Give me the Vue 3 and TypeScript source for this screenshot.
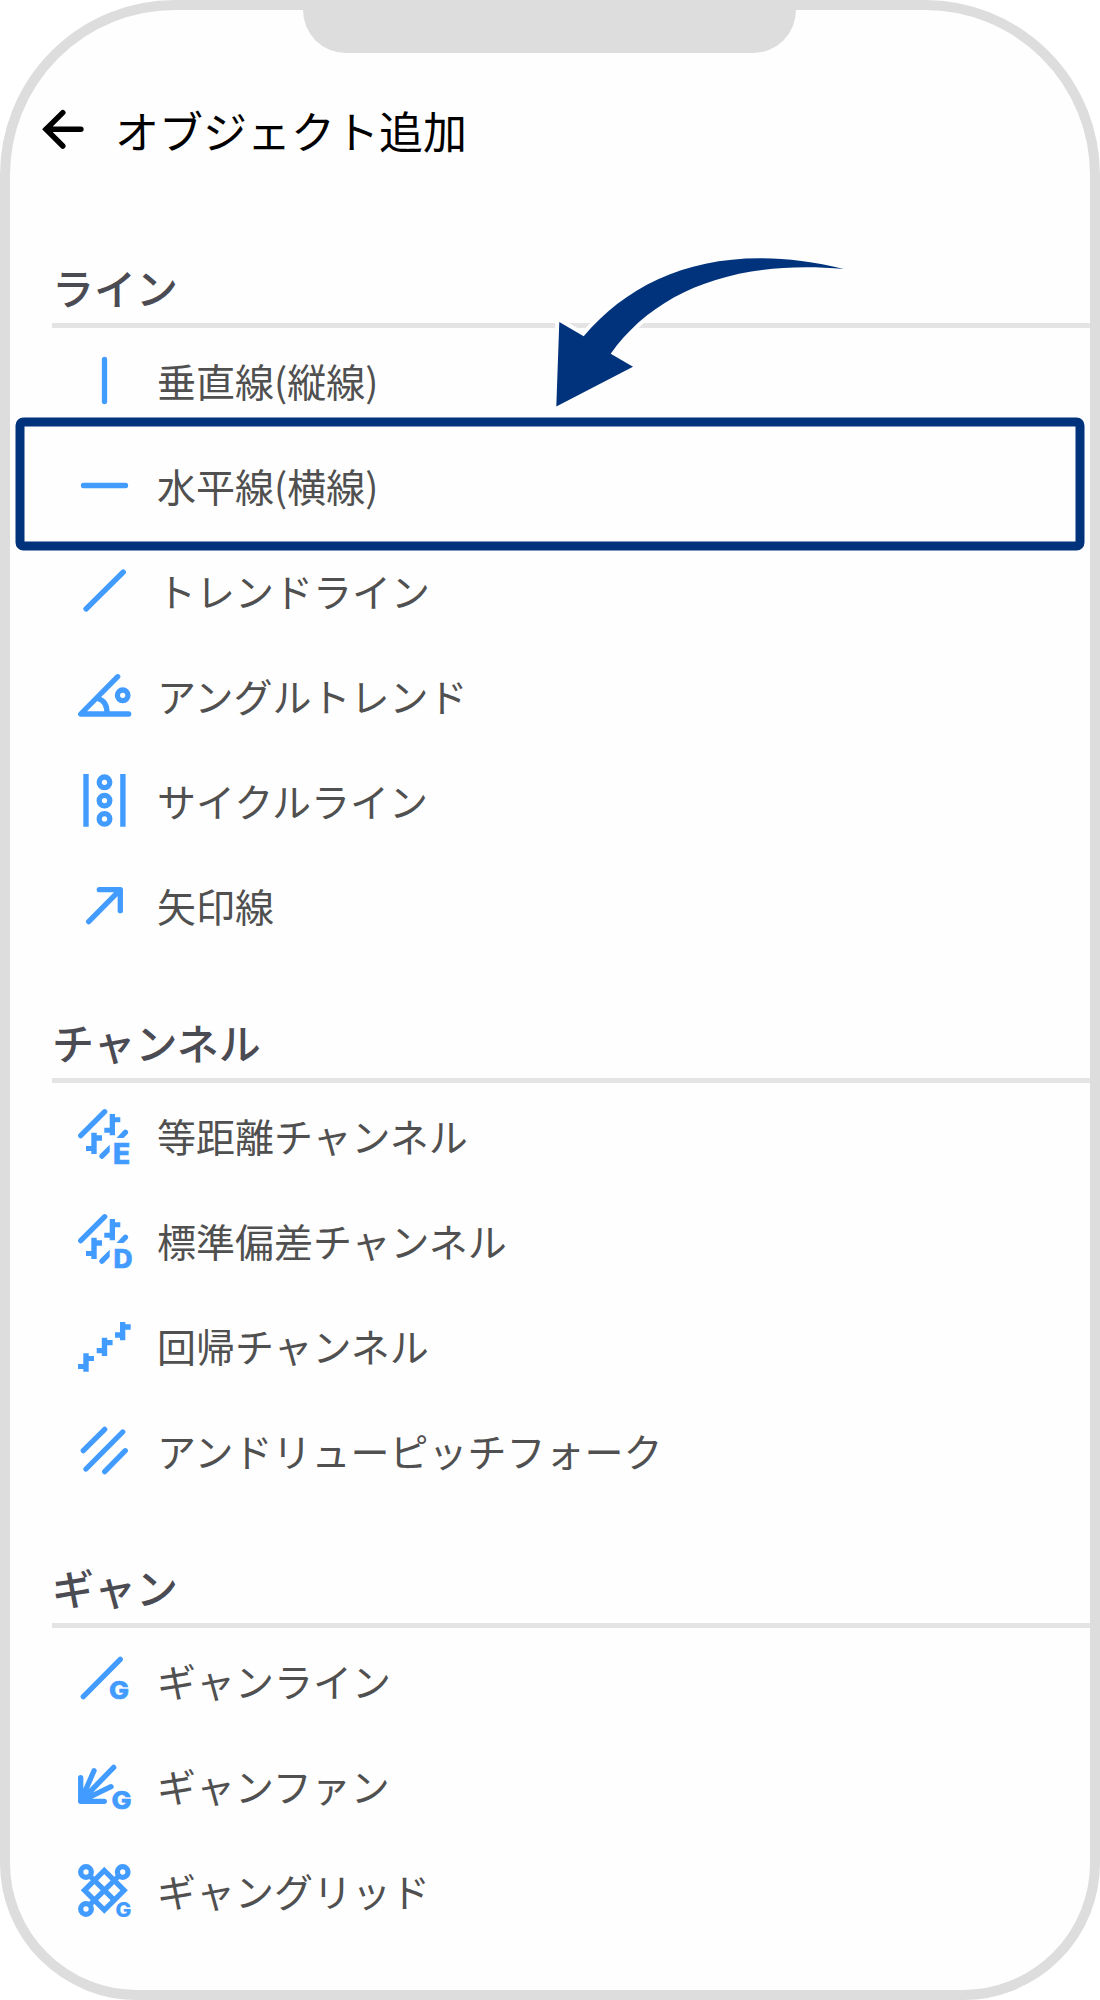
<script setup lang="ts">
type IconLetter = { char: string; x: number; y: number; size: number; width: number }
type Item = {
  label: string
  lines?: string
  solid?: string
  rings?: [number, number][]
  letter?: IconLetter
  flat?: boolean
}
type Section = { title: string; items: Item[] }

// Candlestick pair with the channel lines around it
const channelLines = 'M30.2 6.2 6.2 30.2'
const channelSolid =
  'M35.2 8.5h5.3v3.3h5.3v5h-5.3v13h-5.3v-2.6h-5.4v-5h5.4z' +
  'M16.8 27.2h5.4v2.6h5.3v5.4h-5.3v13.3h-5.4v-3h-5.3v-5h5.3z' +
  'M42 32.5 48.9 24.9A2.7 2.7 0 0 1 52.8 28.7L49 32.5z' +
  'M35.2 39.2 25.3 48.9A2.7 2.7 0 0 0 29.1 52.7L35.2 46.5z'

const sections: Section[] = [
  {
    title: 'ライン',
    items: [
      { label: '垂直線(縦線)', lines: 'M30 9V51' },
      { label: '水平線(横線)', lines: 'M9 30H51' },
      { label: 'トレンドライン', lines: 'M48.8 11.5 11.5 48.5' },
      {
        label: 'アングルトレンド',
        lines: 'M43.2 11.2 6.2 48.5H54.2M23.2 33C29.5 34.6 32.8 40 32.5 48.5',
        rings: [[48.2, 29.8]],
      },
      {
        label: 'サイクルライン',
        solid: 'M8.8 3.5h5.4v52.7h-5.4zM45.7 3.5h5.4v52.7h-5.4z',
        rings: [[30, 11.8], [30, 30.1], [30, 48.4]],
      },
      { label: '矢印線', lines: 'M24.8 14.2H45.8V35.2M45.8 14.2 14.2 46.2' },
    ],
  },
  {
    title: 'チャンネル',
    items: [
      {
        label: '等距離チャンネル',
        lines: channelLines,
        solid: channelSolid,
        letter: { char: 'E', x: 38.6, y: 58.9, size: 28, width: 17.2 },
      },
      {
        label: '標準偏差チャンネル',
        lines: channelLines,
        solid: channelSolid,
        letter: { char: 'D', x: 39, y: 57, size: 25.4, width: 19 },
      },
      {
        label: '回帰チャンネル',
        solid:
          'M45.5 6.5h5.3v2.3h5.4v5.4h-5.4v10.6h-5.3v-2.6h-5v-5.4h5z' +
          'M27.3 22.2h5.4v2.3h5.4v5.3h-5.4v10.7h-5.4v-2.7h-5.1v-5.3h5.1z' +
          'M8.8 37.8h5.4v2.7h5.3v5h-5.3v10.7h-5.4v-2.7h-5.3v-5h5.3z',
      },
      {
        label: 'アンドリューピッチフォーク',
        lines: 'M30.2 8.8 8.8 30.2M48.2 11.5 11.5 48.5M50.8 30.2 30.2 51.2',
      },
    ],
  },
  {
    title: 'ギャン',
    items: [
      {
        label: 'ギャンライン',
        lines: 'M45.8 8.8 8.8 46.2',
        letter: { char: 'G', x: 34.4, y: 48.5, size: 25, width: 20 },
      },
      {
        label: 'ギャンファン',
        lines: 'M6.2 22.2V45.8H29.8M19.5 15.2 6.2 45.8 39.2 11.8M6.2 45.8 36.5 31.2',
        letter: { char: 'G', x: 37, y: 53.2, size: 25, width: 20 },
      },
      {
        label: 'ギャングリッド',
        lines: 'M29.8 10 49.6 29.8 29.8 49.6 10 29.8zM15.5 15.5 39.7 39.7M44.2 15.5 15.5 44.2',
        rings: [[11.5, 11.5], [48.2, 11.5], [11.5, 48.5]],
        letter: { char: 'G', x: 41, y: 56.2, size: 20.4, width: 15.8 },
        flat: true,
      },
    ],
  },
]
</script>

<template>
  <div class="phone">
    <div class="notch"></div>
    <header class="header">
      <svg class="back" width="60" height="60" viewBox="0 0 60 60">
        <path d="M42.8 14.6 26 31.3 42.8 48M26 31.3H60.9" />
      </svg>
      <h1>オブジェクト追加</h1>
    </header>

    <main>
      <section v-for="section in sections" :key="section.title">
        <h2>{{ section.title }}</h2>
        <ul>
          <li v-for="item in section.items" :key="item.label">
            <svg class="icon" width="60" height="60" viewBox="0 0 60 60">
              <path v-if="item.lines" class="lines" :class="{ flat: item.flat }" :d="item.lines" />
              <path v-if="item.solid" class="solid" :d="item.solid" />
              <circle
                v-for="(ring, i) in item.rings ?? []"
                :key="i"
                class="ring"
                :cx="ring[0]"
                :cy="ring[1]"
                r="5.3"
              />
              <text
                v-if="item.letter"
                :class="{ small: item.flat }"
                :x="item.letter.x"
                :y="item.letter.y"
                :font-size="item.letter.size"
                :textLength="item.letter.width"
                lengthAdjust="spacingAndGlyphs"
              >{{ item.letter.char }}</text>
            </svg>
            <span>{{ item.label }}</span>
          </li>
        </ul>
      </section>
    </main>

    <svg class="callout" width="1100" height="2000" viewBox="0 0 1100 2000">
      <rect x="20" y="422" width="1060" height="124" rx="3.5" />
      <path
        d="M844 269C725 240 638 272 583.7 336.3L559.3 322 556.3 406.5 633 366.7 610.7 353.7C655 291 735 259 844 269z"
      />
    </svg>
  </div>
</template>

<style>
body {
  margin: 0;
  background: #fff;
}
</style>

<style scoped>
.phone {
  position: relative;
  box-sizing: border-box;
  width: 1100px;
  height: 2000px;
  overflow: hidden;
  border: 10px solid #ddd;
  border-radius: 175px 175px 137px 137px;
  background: #fefefe;
  font-family: "Noto Sans CJK JP", sans-serif;
}

.notch {
  width: 493px;
  height: 43px;
  margin-left: 293px;
  border-radius: 0 0 44px 44px;
  background: #ddd;
}

.header {
  display: flex;
  align-items: center;
  height: 150px;
  padding-left: 10px;
}

.back {
  flex: none;
  margin-right: 35px;
  overflow: visible;
  fill: none;
  stroke: #000;
  stroke-width: 5.5;
  stroke-linecap: round;
}

h1 {
  margin: 0;
  padding-top: 4px;
  color: #000;
  font-size: 44px;
  font-weight: 400;
  line-height: 60px;
}

section {
  padding-left: 42px;
}

h2 {
  box-sizing: border-box;
  height: 125px;
  margin: 0;
  padding-top: 54px;
  border-bottom: 5px solid #e4e4e4;
  color: #4b4b53;
  font-size: 42px;
  font-weight: 500;
  line-height: 60px;
}

ul {
  margin: 0;
  padding: 0;
  list-style: none;
}

li {
  display: flex;
  align-items: center;
  height: 105px;
  padding-left: 23px;
}

.icon {
  flex: none;
  overflow: visible;
}

.icon > * {
  transform: translate(-0.5px, -0.5px);
}

.icon .lines,
.icon .ring {
  fill: none;
  stroke: #429bff;
  stroke-width: 5.3;
  stroke-linecap: round;
  stroke-linejoin: round;
}

.icon .flat {
  stroke-linecap: butt;
  stroke-linejoin: miter;
}

.icon .solid,
.icon text {
  fill: #429bff;
}

.icon text {
  stroke: #429bff;
  stroke-width: 0.6;
  font-family: Inter, sans-serif;
  font-weight: 800;
}

.icon .small {
  stroke-width: 0.2;
}

li span {
  margin-left: 22px;
  padding-bottom: 1px;
  color: #505050;
  font-size: 39px;
  line-height: 60px;
}

.callout {
  position: absolute;
  top: -10px;
  left: -10px;
  pointer-events: none;
}

.callout rect {
  fill: none;
  stroke: #01337c;
  stroke-width: 9;
}

.callout path {
  fill: #01337c;
  stroke: #fefefe;
  stroke-width: 8;
  paint-order: stroke;
}
</style>
